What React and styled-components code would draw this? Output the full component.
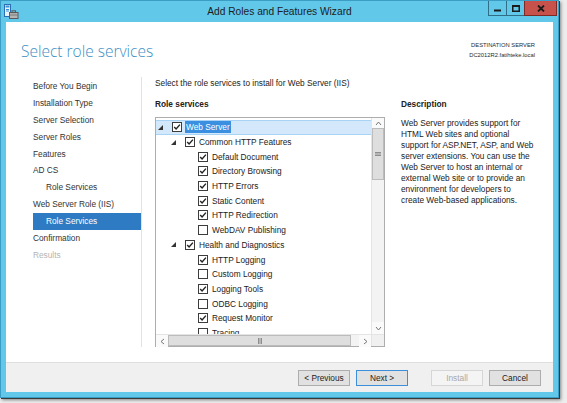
import React from "react";
import styled, { createGlobalStyle } from "styled-components";

const FONT = `"Liberation Sans", Arial, sans-serif`;

const Global = createGlobalStyle`
  html, body { margin: 0; padding: 0; }
  body {
    background: #ececec;
    font-family: ${FONT};
    width: 567px;
    height: 403px;
    overflow: hidden;
  }
`;

const Window = styled.div`
  width: 559px;
  height: 398px;
  box-sizing: border-box;
  border: 1px solid #3b9dc4;
  background: #62c8ea;
  display: flex;
  flex-direction: column;
  box-shadow: 1px 1px 0 #3a3a3a, 2px 2px 3px rgba(0, 0, 0, 0.45);
`;

const TitleBar = styled.div`
  height: 21px;
  flex-shrink: 0;
  display: grid;
  grid-template-columns: 1fr auto 1fr;
  align-items: start;
`;

const AppIcon = styled.svg`
  margin: 2px 0 0 2px;
  display: block;
`;

const TitleText = styled.div`
  font-size: 10.2px;
  line-height: 21px;
  color: #1d1d1d;
  white-space: nowrap;
`;

const Controls = styled.div`
  justify-self: end;
  display: flex;
  margin-right: 1px;
`;

const CtrlButton = styled.div`
  width: ${(p) => p.$w}px;
  height: 15px;
  box-sizing: border-box;
  border: 1px solid ${(p) => (p.$close ? "#7d2a25" : "#2f6e86")};
  border-top: none;
  margin-left: -1px;
  background: ${(p) => (p.$close ? "#c7524c" : "#62c8ea")};
  display: flex;
  align-items: center;
  justify-content: center;
`;

const Client = styled.div`
  flex: 1;
  margin: 0 5px 5px;
  background: #ffffff;
  display: flex;
  flex-direction: column;
  min-height: 0;
`;

const Header = styled.div`
  height: 55px;
  flex-shrink: 0;
  display: flex;
  align-items: center;
  justify-content: space-between;
  padding: 0 18px 0 15px;
`;

const PageTitle = styled.div`
  font-family: "Open Sans", "Liberation Sans", sans-serif;
  font-weight: 300;
  font-size: 15.5px;
  color: #3d8fc3;
  margin-top: 2px;
`;

const Destination = styled.div`
  text-align: right;
  font-size: 5.8px;
  line-height: 10px;
  color: #2b2b2b;
`;

const Main = styled.div`
  flex: 1;
  display: flex;
  min-height: 0;
`;

const Nav = styled.div`
  width: 135px;
  flex-shrink: 0;
  border-right: 1px solid #e2e2e2;
  margin-bottom: 15px;
  padding-top: 1px;
`;

const NavItem = styled.div`
  height: 16.9px;
  line-height: 16.9px;
  font-size: 8.3px;
  margin-left: 27px;
  padding-left: ${(p) => (p.$sub ? 13 : 0)}px;
  color: ${(p) => (p.$active ? "#ffffff" : p.$disabled ? "#b4b4b4" : "#333333")};
  background: ${(p) => (p.$active ? "#2e7bc3" : "transparent")};
  white-space: nowrap;
`;

const Content = styled.div`
  flex: 1;
  padding-left: 13px;
  display: flex;
  flex-direction: column;
`;

const Intro = styled.div`
  font-size: 8.3px;
  line-height: 12px;
  color: #222;
`;

const Columns = styled.div`
  display: flex;
  gap: 16px;
  margin-top: 9px;
`;

const LeftCol = styled.div`
  width: 230px;
  flex-shrink: 0;
`;

const Heading = styled.div`
  font-size: 8.3px;
  line-height: 12px;
  font-weight: bold;
  color: #222;
`;

const TreeBox = styled.div`
  margin-top: 7px;
  height: 230px;
  box-sizing: border-box;
  border: 1px solid #adadad;
  display: grid;
  grid-template-columns: 1fr 13px;
  grid-template-rows: 1fr 12px;
  background: #fff;
`;

const List = styled.div`
  overflow: hidden;
  padding-top: 2px;
  min-height: 0;
`;

const Row = styled.div`
  height: 14.7px;
  box-sizing: border-box;
  display: flex;
  align-items: center;
  padding-left: ${(p) => p.$level * 13}px;
  background: ${(p) => (p.$selected ? "#d3e9fb" : "transparent")};
  border: 1px solid ${(p) => (p.$selected ? "#a9d3f5" : "transparent")};
  border-left: none;
  border-right: none;
`;

const Expander = styled.div`
  width: 16px;
  flex-shrink: 0;
  display: flex;
  align-items: center;
  padding-left: 2px;
  box-sizing: border-box;
`;

const Check = styled.div`
  width: 10px;
  height: 10px;
  box-sizing: border-box;
  border: 1px solid #3c3c3c;
  background: #fff;
  margin-right: 4px;
  flex-shrink: 0;
  display: flex;
  align-items: center;
  justify-content: center;
`;

const ItemLabel = styled.span`
  font-size: 8.3px;
  line-height: 12px;
  padding: 0 1px;
  margin-left: -1px;
  white-space: nowrap;
  color: ${(p) => (p.$selected ? "#ffffff" : "#222")};
  background: ${(p) => (p.$selected ? "#3b8fe0" : "transparent")};
`;

const VScroll = styled.div`
  background: #f3f3f3;
  border-left: 1px solid #e4e4e4;
  display: flex;
  flex-direction: column;
  min-height: 0;
`;

const HScroll = styled.div`
  background: #f3f3f3;
  border-top: 1px solid #e4e4e4;
  display: flex;
`;

const Corner = styled.div`
  background: #f0f0f0;
  border-top: 1px solid #e4e4e4;
  border-left: 1px solid #e4e4e4;
`;

const Arrow = styled.div`
  width: 12px;
  height: ${(p) => (p.$short ? 10 : 12)}px;
  flex-shrink: 0;
  display: flex;
  align-items: center;
  justify-content: center;
  background: #fafafa;
`;

const VThumb = styled.div`
  height: 52px;
  box-sizing: border-box;
  border: 1px solid #bcbcbc;
  background: #dedede;
  display: flex;
  align-items: center;
  justify-content: center;
`;

const HThumb = styled.div`
  width: 183px;
  box-sizing: border-box;
  border: 1px solid #bcbcbc;
  background: #dedede;
  display: flex;
  align-items: center;
  justify-content: center;
`;

const Spacer = styled.div`
  flex: 1;
`;

const DescCol = styled.div`
  width: 140px;
`;

const DescText = styled.div`
  margin-top: 7.5px;
  font-size: 8.3px;
  line-height: 11.1px;
  color: #222;
  white-space: nowrap;
`;

const Footer = styled.div`
  height: 30px;
  flex-shrink: 0;
  box-sizing: border-box;
  background: #f0f0f0;
  border-top: 1px solid #dfdfdf;
  display: flex;
  align-items: center;
  justify-content: flex-end;
  gap: 6px;
  padding-right: 12px;
`;

const Button = styled.div`
  width: 52px;
  height: 16px;
  box-sizing: border-box;
  border: 1px solid ${(p) => (p.$primary ? "#3d8fdc" : p.$disabled ? "#d6d6d6" : "#adadad")};
  background: ${(p) => (p.$disabled ? "#f4f4f4" : "#e1e1e1")};
  color: ${(p) => (p.$disabled ? "#a9a9a9" : "#222")};
  font-size: 8.3px;
  display: flex;
  align-items: center;
  justify-content: center;
  margin-left: ${(p) => p.$gapBefore || 0}px;
`;

const Tick = () => (
  <svg width="8" height="8" viewBox="0 0 8 8">
    <polyline points="1.2,4 3.1,6 6.9,1.6" fill="none" stroke="#222" strokeWidth="1.4" />
  </svg>
);

const Triangle = () => (
  <svg width="5" height="5" viewBox="0 0 5 5">
    <polygon points="5,0 5,5 0,5" fill="#333" />
  </svg>
);

const Chevron = ({ dir }) => {
  const pts = {
    up: "1,5 3.5,2 6,5",
    down: "1,2 3.5,5 6,2",
    left: "5,1 2,3.5 5,6",
    right: "2,1 5,3.5 2,6",
  }[dir];
  return (
    <svg width="7" height="7" viewBox="0 0 7 7">
      <polyline points={pts} fill="none" stroke="#777" strokeWidth="1" />
    </svg>
  );
};

const Grip = ({ vertical }) =>
  vertical ? (
    <svg width="6" height="6" viewBox="0 0 6 6">
      <path d="M0 1.5h6M0 3h6M0 4.5h6" stroke="#7a7a7a" strokeWidth="0.8" />
    </svg>
  ) : (
    <svg width="6" height="6" viewBox="0 0 6 6">
      <path d="M1.5 0v6M3 0v6M4.5 0v6" stroke="#7a7a7a" strokeWidth="0.8" />
    </svg>
  );

const navItems = [
  { label: "Before You Begin" },
  { label: "Installation Type" },
  { label: "Server Selection" },
  { label: "Server Roles" },
  { label: "Features" },
  { label: "AD CS" },
  { label: "Role Services", sub: true },
  { label: "Web Server Role (IIS)" },
  { label: "Role Services", sub: true, active: true },
  { label: "Confirmation" },
  { label: "Results", disabled: true },
];

const tree = [
  { label: "Web Server", level: 0, exp: true, checked: true, selected: true },
  { label: "Common HTTP Features", level: 1, exp: true, checked: true },
  { label: "Default Document", level: 2, checked: true },
  { label: "Directory Browsing", level: 2, checked: true },
  { label: "HTTP Errors", level: 2, checked: true },
  { label: "Static Content", level: 2, checked: true },
  { label: "HTTP Redirection", level: 2, checked: true },
  { label: "WebDAV Publishing", level: 2, checked: false },
  { label: "Health and Diagnostics", level: 1, exp: true, checked: true },
  { label: "HTTP Logging", level: 2, checked: true },
  { label: "Custom Logging", level: 2, checked: false },
  { label: "Logging Tools", level: 2, checked: true },
  { label: "ODBC Logging", level: 2, checked: false },
  { label: "Request Monitor", level: 2, checked: true },
  { label: "Tracing", level: 2, checked: false },
];

const descLines = [
  "Web Server provides support for",
  "HTML Web sites and optional",
  "support for ASP.NET, ASP, and Web",
  "server extensions. You can use the",
  "Web Server to host an internal or",
  "external Web site or to provide an",
  "environment for developers to",
  "create Web-based applications.",
];

export default function App() {
  return (
    <>
      <Global />
      <Window>
        <TitleBar>
          <AppIcon width="16" height="16" viewBox="0 0 16 16">
            <rect x="1.5" y="1.5" width="6" height="12" fill="#e8f4fc" stroke="#2a6fb4" />
            <rect x="2.5" y="2.5" width="4" height="2" fill="#3d8fd8" />
            <path d="M3 6.5h3M3 8h3" stroke="#3d8fd8" />
            <rect x="6.5" y="9.5" width="8.5" height="6" fill="#b5b5b5" stroke="#5a5a5a" />
            <rect x="9" y="7.8" width="3.5" height="1.8" fill="none" stroke="#5a5a5a" />
            <path d="M6.5 12h8.5" stroke="#7a7a7a" />
          </AppIcon>
          <TitleText>Add Roles and Features Wizard</TitleText>
          <Controls>
            <CtrlButton $w={19}>
              <svg width="7" height="7" viewBox="0 0 7 7">
                <rect x="0" y="4.5" width="7" height="2" fill="#1b1b1b" />
              </svg>
            </CtrlButton>
            <CtrlButton $w={19}>
              <svg width="8" height="7" viewBox="0 0 8 7">
                <rect x="0.75" y="0.75" width="6.5" height="5.5" fill="none" stroke="#1b1b1b" strokeWidth="1.5" />
                <rect x="0" y="0" width="8" height="2" fill="#1b1b1b" />
              </svg>
            </CtrlButton>
            <CtrlButton $w={33} $close>
              <svg width="8" height="7" viewBox="0 0 8 7">
                <path d="M1 0.5L7 6.5M7 0.5L1 6.5" stroke="#1b1b1b" strokeWidth="1.8" />
              </svg>
            </CtrlButton>
          </Controls>
        </TitleBar>
        <Client>
          <Header>
            <PageTitle>Select role services</PageTitle>
            <Destination>
              <div>DESTINATION SERVER</div>
              <div>DC2012R2.fatihteke.local</div>
            </Destination>
          </Header>
          <Main>
            <Nav>
              {navItems.map((n, i) => (
                <NavItem key={i} $sub={n.sub} $active={n.active} $disabled={n.disabled}>
                  {n.label}
                </NavItem>
              ))}
            </Nav>
            <Content>
              <Intro>Select the role services to install for Web Server (IIS)</Intro>
              <Columns>
                <LeftCol>
                  <Heading>Role services</Heading>
                  <TreeBox>
                    <List>
                      {tree.map((t, i) => (
                        <Row key={i} $level={t.level} $selected={t.selected}>
                          <Expander>{t.exp ? <Triangle /> : null}</Expander>
                          <Check>{t.checked ? <Tick /> : null}</Check>
                          <ItemLabel $selected={t.selected}>{t.label}</ItemLabel>
                        </Row>
                      ))}
                    </List>
                    <VScroll>
                      <Arrow $short>
                        <Chevron dir="up" />
                      </Arrow>
                      <VThumb>
                        <Grip vertical />
                      </VThumb>
                      <Spacer />
                      <Arrow>
                        <Chevron dir="down" />
                      </Arrow>
                    </VScroll>
                    <HScroll>
                      <Arrow>
                        <Chevron dir="left" />
                      </Arrow>
                      <HThumb>
                        <Grip />
                      </HThumb>
                      <Spacer />
                      <Arrow>
                        <Chevron dir="right" />
                      </Arrow>
                    </HScroll>
                    <Corner />
                  </TreeBox>
                </LeftCol>
                <DescCol>
                  <Heading>Description</Heading>
                  <DescText>
                    {descLines.map((l, i) => (
                      <div key={i}>{l}</div>
                    ))}
                  </DescText>
                </DescCol>
              </Columns>
            </Content>
          </Main>
          <Footer>
            <Button>&lt; Previous</Button>
            <Button $primary>Next &gt;</Button>
            <Button $disabled $gapBefore={17}>Install</Button>
            <Button>Cancel</Button>
          </Footer>
        </Client>
      </Window>
    </>
  );
}
